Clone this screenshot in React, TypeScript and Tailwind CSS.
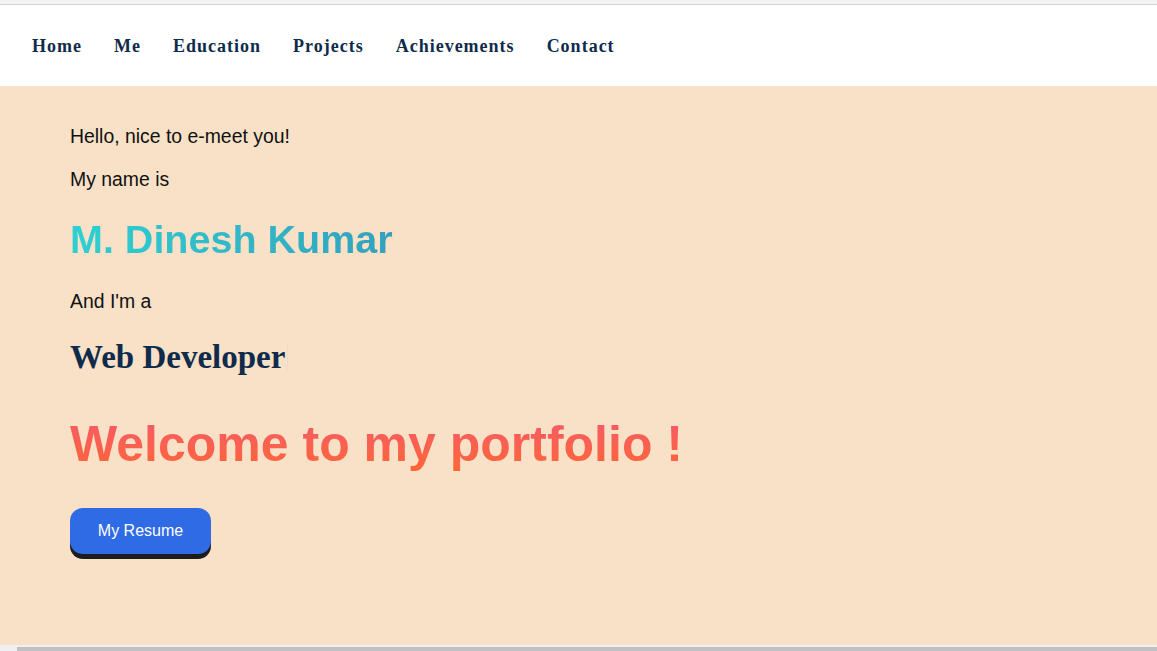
const navItems = ["Home", "Me", "Education", "Projects", "Achievements", "Contact"]

export default function App() {
  return (
    <div className="h-[651px] w-full flex flex-col overflow-hidden bg-white">
      {/* browser top edge */}
      <div className="h-[4px] bg-[#f3f3f3]" />
      <div className="h-px bg-[#d4d4d4]" />

      <nav className="h-[81px] bg-white flex items-center pl-[32px] pt-[2px] gap-[32px]">
        {navItems.map((item) => (
          <a
            key={item}
            href="#"
            className="text-[18px] font-bold tracking-[1px] text-[#0f2b4c] font-['Liberation_Serif','Times_New_Roman',serif]"
          >
            {item}
          </a>
        ))}
      </nav>

      <main className="flex-1 bg-[#f8e1c6] pl-[70px] pt-[39px] font-['Liberation_Sans',Arial,sans-serif]">
        <p className="text-[19.4px] leading-[22px] text-[#111]">Hello, nice to e-meet you!</p>
        <p className="mt-[21px] text-[19.4px] leading-[22px] text-[#111]">My name is</p>
        <h1 className="mt-[26px] text-[39.5px] leading-[46px] font-bold">
          <span className="inline-block bg-gradient-to-r from-[#2ed0d3] to-[#33a1bd] bg-clip-text text-transparent">
            M. Dinesh Kumar
          </span>
        </h1>
        <p className="mt-[28px] text-[19.4px] leading-[22px] text-[#111]">And I'm a</p>
        <h2 className="mt-[26px] flex items-center text-[33px] leading-[38px] font-bold text-[#0f2b4c] font-['Liberation_Serif','Times_New_Roman',serif]">
          Web Developer
          <span className="ml-[2px] w-px h-[28px] bg-[#e6dccf]" />
        </h2>
        <h1 className="mt-[39px] text-[50px] leading-[58px] font-bold">
          <span className="inline-block bg-gradient-to-b from-[#f55a68] to-[#ff6630] bg-clip-text text-transparent">
            Welcome to my portfolio !
          </span>
        </h1>
        <button className="mt-[35px] w-[141px] h-[46px] rounded-[13px] bg-[#2e6be4] text-white text-[16px] shadow-[0_5px_0_#1c1c1c]">
          My Resume
        </button>
      </main>

      {/* horizontal scrollbar */}
      <div className="h-[6px] bg-[#f0f0f0] flex items-end">
        <div className="w-[17px]" />
        <div className="flex-1 h-[4px] bg-[#c1c1c1]" />
      </div>
    </div>
  )
}
